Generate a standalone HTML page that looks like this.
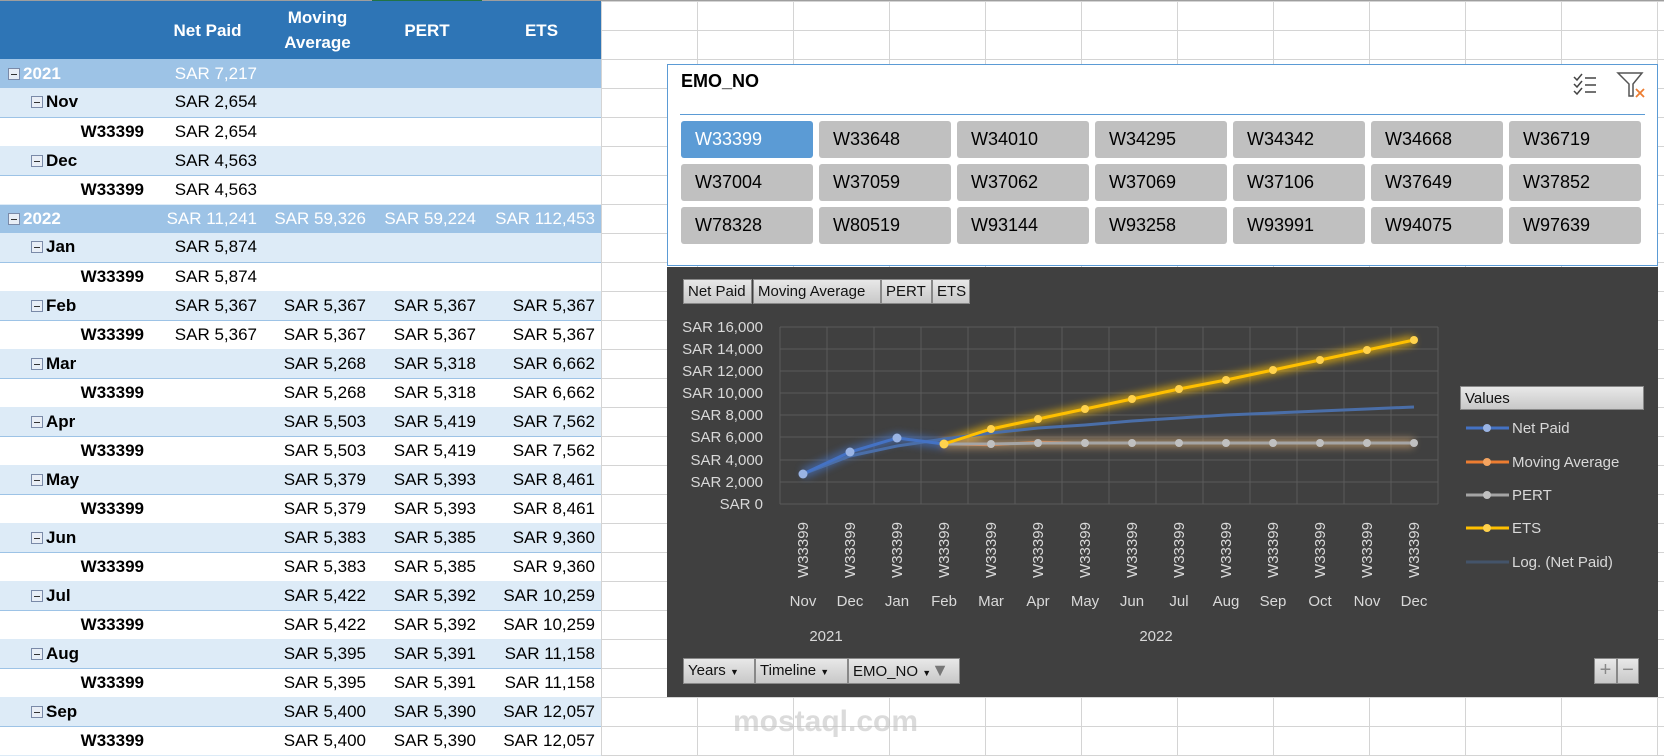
<!DOCTYPE html>
<html><head><meta charset="utf-8"><style>
*{margin:0;padding:0;box-sizing:border-box}
body{width:1664px;height:756px;overflow:hidden;background:#fff;font-family:"Liberation Sans",sans-serif;position:relative}
.grid{position:absolute;left:601px;top:0;width:1063px;height:756px;
background-image:linear-gradient(90deg,#d4d4d4 1px,transparent 1px),linear-gradient(180deg,#d4d4d4 1px,transparent 1px);
background-size:96px 100%,100% 29px;background-position:96px 0,0 1px}
table{position:absolute;left:0;top:1px;border-collapse:collapse;table-layout:fixed;width:601px;font-size:17px}
td{height:29px;padding:0 6px;text-align:right;white-space:nowrap;overflow:hidden;color:#000}
tr.h td{height:58px;background:#2e75b6;color:#fff;font-weight:bold;text-align:center;line-height:25px}
tr.y td{background:#9dc3e6;color:#fff}
tr.y td:first-child{font-weight:bold;text-align:left;padding-left:8px}
tr.m td{background:#ddebf7;border-bottom:1px solid #9dc3e6}
tr.m td:first-child{font-weight:bold;text-align:left;padding-left:31px}
tr.w td{background:#fff;border-bottom:1px solid #ddebf7}
tr.w td:first-child{font-weight:bold;text-align:right;padding-right:8px}
.bx{display:inline-block;width:12px;height:12px;border:1px solid #7a8aa8;background:#e8eef6;vertical-align:-1px;margin-right:3px;position:relative}
.bx:after{content:"";position:absolute;left:2px;right:2px;top:5px;height:1px;background:#333}
.sl{position:absolute;left:667px;top:64px;width:991px;height:202px;border:1px solid #5b9bd5;background:#fff}
.sl .t{position:absolute;left:13px;top:6px;font-weight:bold;font-size:18px}
.sl .ln{position:absolute;left:12px;right:12px;top:49px;height:1px;background:#5b9bd5}
.b{position:absolute;width:132px;height:37px;background:#c0c0c0;border-radius:3px;font-size:18px;line-height:37px;padding-left:14px}
.ch{position:absolute;left:667px;top:267px;width:991px;height:430px;background:#404040}
.fb{position:absolute;background:linear-gradient(#e8e8e8,#c8c8c8);border:1px solid #888;font-size:15px;color:#111;line-height:23px;padding-left:4px;font-family:"Liberation Sans Narrow","Liberation Sans",sans-serif}
</style></head><body>
<div class="grid"></div>
<div style="position:absolute;left:0;top:0;width:1664px;height:1px;background:#9e9e9e"></div>
<div style="position:absolute;left:372px;top:0;width:110px;height:2px;background:#217346"></div>
<table>
<colgroup><col style="width:152px"><col style="width:111px"><col style="width:109px"><col style="width:110px"><col style="width:119px"></colgroup>
<tr class="h"><td></td><td>Net Paid</td><td>Moving<br>Average</td><td>PERT</td><td>ETS</td></tr>
<tr class="y"><td><span class="bx"></span>2021</td><td>SAR 7,217</td><td></td><td></td><td></td></tr>
<tr class="m"><td><span class="bx"></span>Nov</td><td>SAR 2,654</td><td></td><td></td><td></td></tr>
<tr class="w"><td>W33399</td><td>SAR 2,654</td><td></td><td></td><td></td></tr>
<tr class="m"><td><span class="bx"></span>Dec</td><td>SAR 4,563</td><td></td><td></td><td></td></tr>
<tr class="w"><td>W33399</td><td>SAR 4,563</td><td></td><td></td><td></td></tr>
<tr class="y"><td><span class="bx"></span>2022</td><td>SAR 11,241</td><td>SAR 59,326</td><td>SAR 59,224</td><td>SAR 112,453</td></tr>
<tr class="m"><td><span class="bx"></span>Jan</td><td>SAR 5,874</td><td></td><td></td><td></td></tr>
<tr class="w"><td>W33399</td><td>SAR 5,874</td><td></td><td></td><td></td></tr>
<tr class="m"><td><span class="bx"></span>Feb</td><td>SAR 5,367</td><td>SAR 5,367</td><td>SAR 5,367</td><td>SAR 5,367</td></tr>
<tr class="w"><td>W33399</td><td>SAR 5,367</td><td>SAR 5,367</td><td>SAR 5,367</td><td>SAR 5,367</td></tr>
<tr class="m"><td><span class="bx"></span>Mar</td><td></td><td>SAR 5,268</td><td>SAR 5,318</td><td>SAR 6,662</td></tr>
<tr class="w"><td>W33399</td><td></td><td>SAR 5,268</td><td>SAR 5,318</td><td>SAR 6,662</td></tr>
<tr class="m"><td><span class="bx"></span>Apr</td><td></td><td>SAR 5,503</td><td>SAR 5,419</td><td>SAR 7,562</td></tr>
<tr class="w"><td>W33399</td><td></td><td>SAR 5,503</td><td>SAR 5,419</td><td>SAR 7,562</td></tr>
<tr class="m"><td><span class="bx"></span>May</td><td></td><td>SAR 5,379</td><td>SAR 5,393</td><td>SAR 8,461</td></tr>
<tr class="w"><td>W33399</td><td></td><td>SAR 5,379</td><td>SAR 5,393</td><td>SAR 8,461</td></tr>
<tr class="m"><td><span class="bx"></span>Jun</td><td></td><td>SAR 5,383</td><td>SAR 5,385</td><td>SAR 9,360</td></tr>
<tr class="w"><td>W33399</td><td></td><td>SAR 5,383</td><td>SAR 5,385</td><td>SAR 9,360</td></tr>
<tr class="m"><td><span class="bx"></span>Jul</td><td></td><td>SAR 5,422</td><td>SAR 5,392</td><td>SAR 10,259</td></tr>
<tr class="w"><td>W33399</td><td></td><td>SAR 5,422</td><td>SAR 5,392</td><td>SAR 10,259</td></tr>
<tr class="m"><td><span class="bx"></span>Aug</td><td></td><td>SAR 5,395</td><td>SAR 5,391</td><td>SAR 11,158</td></tr>
<tr class="w"><td>W33399</td><td></td><td>SAR 5,395</td><td>SAR 5,391</td><td>SAR 11,158</td></tr>
<tr class="m"><td><span class="bx"></span>Sep</td><td></td><td>SAR 5,400</td><td>SAR 5,390</td><td>SAR 12,057</td></tr>
<tr class="w"><td>W33399</td><td></td><td>SAR 5,400</td><td>SAR 5,390</td><td>SAR 12,057</td></tr>
</table>

<div class="sl">
<div class="t">EMO_NO</div>
<svg style="position:absolute;left:902px;top:4px" width="80" height="32" viewBox="0 0 80 32">
<g fill="none" stroke="#444" stroke-width="1.5"><path d="M4 8l3 3 5-6M4 15l3 3 5-6M4 22l3 3 5-6"/><path d="M15 9h11M15 16h11M15 23h11"/>
<path d="M48 4h24l-9 11v12h-4V15z" stroke="#555"/></g>
<path d="M66 20l8 8M74 20l-8 8" stroke="#ed7d31" stroke-width="1.8"/>
</svg>
<div class="ln"></div>
<div class="b" style="left:13px;top:56px;background:#5b9bd5;color:#fff">W33399</div>
<div class="b" style="left:151px;top:56px">W33648</div>
<div class="b" style="left:289px;top:56px">W34010</div>
<div class="b" style="left:427px;top:56px">W34295</div>
<div class="b" style="left:565px;top:56px">W34342</div>
<div class="b" style="left:703px;top:56px">W34668</div>
<div class="b" style="left:841px;top:56px">W36719</div>
<div class="b" style="left:13px;top:99px">W37004</div>
<div class="b" style="left:151px;top:99px">W37059</div>
<div class="b" style="left:289px;top:99px">W37062</div>
<div class="b" style="left:427px;top:99px">W37069</div>
<div class="b" style="left:565px;top:99px">W37106</div>
<div class="b" style="left:703px;top:99px">W37649</div>
<div class="b" style="left:841px;top:99px">W37852</div>
<div class="b" style="left:13px;top:142px">W78328</div>
<div class="b" style="left:151px;top:142px">W80519</div>
<div class="b" style="left:289px;top:142px">W93144</div>
<div class="b" style="left:427px;top:142px">W93258</div>
<div class="b" style="left:565px;top:142px">W93991</div>
<div class="b" style="left:703px;top:142px">W94075</div>
<div class="b" style="left:841px;top:142px">W97639</div>
</div>

<div class="ch"></div>
<div class="fb" style="left:683px;top:279px;width:69px;height:25px">Net Paid</div>
<div class="fb" style="left:753px;top:279px;width:128px;height:25px">Moving Average</div>
<div class="fb" style="left:881px;top:279px;width:51px;height:25px">PERT</div>
<div class="fb" style="left:932px;top:279px;width:38px;height:25px">ETS</div>

<svg style="position:absolute;left:0;top:0" width="1664" height="756" viewBox="0 0 1664 756">
<defs><filter id="g" x="-20%" y="-50%" width="140%" height="200%"><feGaussianBlur stdDeviation="4"/></filter></defs>
<g stroke="#5a5a5a" stroke-width="1">
<path d="M780 327H1438M780 349H1438M780 371H1438M780 393H1438M780 415H1438M780 437H1438M780 460H1438M780 482H1438M780 504H1438"/>
<path d="M780 327V504M827 327V504M874 327V504M921 327V504M968 327V504M1015 327V504M1062 327V504M1109 327V504M1156 327V504M1203 327V504M1250 327V504M1297 327V504M1344 327V504M1391 327V504M1438 327V504"/>
</g>
<g font-size="15" fill="#d9d9d9" text-anchor="end">
<text x="763" y="332">SAR 16,000</text><text x="763" y="354">SAR 14,000</text><text x="763" y="376">SAR 12,000</text><text x="763" y="398">SAR 10,000</text><text x="763" y="420">SAR 8,000</text><text x="763" y="442">SAR 6,000</text><text x="763" y="465">SAR 4,000</text><text x="763" y="487">SAR 2,000</text><text x="763" y="509">SAR 0</text>
</g>
<!-- glows -->
<g filter="url(#g)" fill="none" stroke-width="9" opacity=".7">
<polyline stroke="#4472c4" points="803,474 850,452 897,438 944,444"/>
<polyline stroke="#ffc000" points="944,444 991,429 1038,419 1085,409 1132,399 1179,389 1226,380 1273,370 1320,360 1367,350 1414,340"/>
<polyline stroke="#c8a070" points="944,444 991,444 1038,443 1085,443 1132,443 1179,443 1226,443 1273,443 1320,443 1367,443 1414,443"/>
</g>
<polyline fill="none" stroke="#4a6ea8" stroke-width="3" points="803,474 850,456 897,446 944,439 991,433 1038,428 1085,425 1132,421 1179,418 1226,415 1273,413 1320,411 1367,409 1414,407"/>
<polyline fill="none" stroke="#ed7d31" stroke-width="2.5" points="944,444 991,445 1038,442 1085,443 1132,443 1179,443 1226,443 1273,443 1320,443 1367,443 1414,443"/>
<polyline fill="none" stroke="#a5a5a5" stroke-width="3" points="944,444 991,444 1038,443 1085,443 1132,443 1179,443 1226,443 1273,443 1320,443 1367,443 1414,443"/>
<polyline fill="none" stroke="#ffc000" stroke-width="3" points="944,444 991,429 1038,419 1085,409 1132,399 1179,389 1226,380 1273,370 1320,360 1367,350 1414,340"/>
<polyline fill="none" stroke="#4472c4" stroke-width="3" points="803,474 850,452 897,438 944,444"/>
<g fill="#c0c0c0"><circle cx="991" cy="444" r="4"/><circle cx="1038" cy="443" r="4"/><circle cx="1085" cy="443" r="4"/><circle cx="1132" cy="443" r="4"/><circle cx="1179" cy="443" r="4"/><circle cx="1226" cy="443" r="4"/><circle cx="1273" cy="443" r="4"/><circle cx="1320" cy="443" r="4"/><circle cx="1367" cy="443" r="4"/><circle cx="1414" cy="443" r="4"/></g>
<g fill="#ffd24d"><circle cx="944" cy="444" r="4.5"/><circle cx="991" cy="429" r="4"/><circle cx="1038" cy="419" r="4"/><circle cx="1085" cy="409" r="4"/><circle cx="1132" cy="399" r="4"/><circle cx="1179" cy="389" r="4"/><circle cx="1226" cy="380" r="4"/><circle cx="1273" cy="370" r="4"/><circle cx="1320" cy="360" r="4"/><circle cx="1367" cy="350" r="4"/><circle cx="1414" cy="340" r="4"/></g>
<g fill="#9ab4e4"><circle cx="803" cy="474" r="4.5"/><circle cx="850" cy="452" r="4.5"/><circle cx="897" cy="438" r="4.5"/></g>
<g font-size="15" fill="#d9d9d9">
<g text-anchor="middle">
<text transform="translate(808,550) rotate(-90)">W33399</text><text transform="translate(855,550) rotate(-90)">W33399</text><text transform="translate(902,550) rotate(-90)">W33399</text><text transform="translate(949,550) rotate(-90)">W33399</text><text transform="translate(996,550) rotate(-90)">W33399</text><text transform="translate(1043,550) rotate(-90)">W33399</text><text transform="translate(1090,550) rotate(-90)">W33399</text><text transform="translate(1137,550) rotate(-90)">W33399</text><text transform="translate(1184,550) rotate(-90)">W33399</text><text transform="translate(1231,550) rotate(-90)">W33399</text><text transform="translate(1278,550) rotate(-90)">W33399</text><text transform="translate(1325,550) rotate(-90)">W33399</text><text transform="translate(1372,550) rotate(-90)">W33399</text><text transform="translate(1419,550) rotate(-90)">W33399</text>
<text x="803" y="606">Nov</text><text x="850" y="606">Dec</text><text x="897" y="606">Jan</text><text x="944" y="606">Feb</text><text x="991" y="606">Mar</text><text x="1038" y="606">Apr</text><text x="1085" y="606">May</text><text x="1132" y="606">Jun</text><text x="1179" y="606">Jul</text><text x="1226" y="606">Aug</text><text x="1273" y="606">Sep</text><text x="1320" y="606">Oct</text><text x="1367" y="606">Nov</text><text x="1414" y="606">Dec</text>
<text x="826" y="641">2021</text><text x="1156" y="641">2022</text>
</g>
<text x="1512" y="433">Net Paid</text><text x="1512" y="467">Moving Average</text><text x="1512" y="500">PERT</text><text x="1512" y="533">ETS</text><text x="1512" y="567">Log. (Net Paid)</text>
</g>
<g stroke-width="3">
<path d="M1466 428H1509" stroke="#4472c4"/><circle cx="1487" cy="428" r="4" fill="#9ab4e4"/>
<path d="M1466 462H1509" stroke="#ed7d31"/><circle cx="1487" cy="462" r="4" fill="#f4a460"/>
<path d="M1466 495H1509" stroke="#a5a5a5"/><circle cx="1487" cy="495" r="4" fill="#c0c0c0"/>
<path d="M1466 528H1509" stroke="#ffc000"/><circle cx="1487" cy="528" r="4" fill="#ffd24d"/>
<path d="M1466 562H1509" stroke="#44546a"/>
</g>
</svg>
<div class="fb" style="left:1460px;top:386px;width:184px;height:24px">Values</div>
<div class="fb" style="left:683px;top:658px;width:72px;height:26px">Years <span style="font-size:9px">▼</span></div>
<div class="fb" style="left:755px;top:658px;width:93px;height:26px">Timeline <span style="font-size:9px">▼</span></div>
<div class="fb" style="left:848px;top:658px;width:112px;height:26px">EMO_NO <span style="font-size:9px">▼</span><span style="color:#777;font-size:18px">▼</span></div>
<div class="fb" style="left:1594px;top:658px;width:23px;height:26px;color:#888;font-size:20px;text-align:center;padding:0">+</div>
<div class="fb" style="left:1617px;top:658px;width:22px;height:26px;color:#888;font-size:20px;text-align:center;padding:0">−</div>
<div style="position:absolute;left:733px;top:705px;font-size:30px;font-weight:bold;color:rgba(190,190,190,.55)">mostaql.com</div>
</body></html>
